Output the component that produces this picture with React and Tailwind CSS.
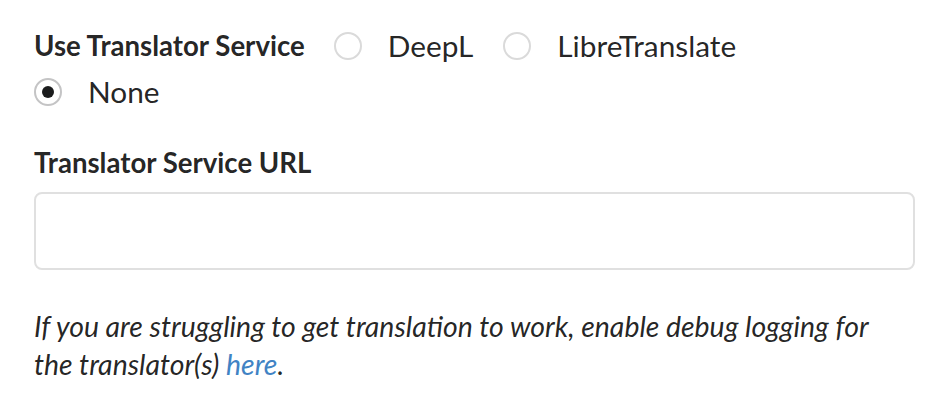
import React, { useState } from 'react';

const Radio = ({ label, checked, onSelect, className = '' }) => (
  <label
    className={`flex h-[40px] cursor-pointer items-center gap-[26px] pr-[30px] text-[29.8px] text-[rgba(0,0,0,0.87)] ${className}`}
    onClick={() => onSelect(label)}
  >
    <span
      className={`flex h-[28px] w-[28px] shrink-0 items-center justify-center rounded-full border-2 ${
        checked ? 'border-[#c4c4c5]' : 'border-[#dadada]'
      } bg-white`}
    >
      {checked && <span className="h-[12px] w-[12px] rounded-full bg-[#1b1c1d]" />}
    </span>
    <span>{label}</span>
  </label>
);

const App = () => {
  const [service, setService] = useState('None');

  return (
    <div className="min-h-screen bg-white pl-[34px] pr-[35px] pt-[26px] font-['Lato','Liberation_Sans',sans-serif] text-[rgba(0,0,0,0.87)]">
      <div className="flex flex-wrap items-center">
        <span className="mr-[29px] flex h-[40px] items-center text-[27.6px] font-bold">Use Translator Service</span>
        <Radio label="DeepL" checked={service === 'DeepL'} onSelect={setService} />
        <Radio label="LibreTranslate" checked={service === 'LibreTranslate'} onSelect={setService} />
        <div className="h-0 basis-full" />
        <Radio label="None" checked={service === 'None'} onSelect={setService} className="mt-[6px]" />
      </div>

      <div className="mt-[31px]">
        <label className="flex h-[40px] items-center text-[27.6px] font-bold">Translator Service URL</label>
        <input
          type="text"
          className="mt-[9px] block h-[78px] w-full rounded-[8px] border-2 border-[#e0e0e0] bg-white px-[28px] text-[28px] outline-none"
        />
      </div>

      <p className="mt-[37px] max-w-[866px] text-[28.4px] italic leading-[38px]">
        If you are struggling to get translation to work, enable debug logging for the translator(s){' '}
        <a href="#" className="text-[#4183c4]">here</a>.
      </p>
    </div>
  );
};

export default App;
